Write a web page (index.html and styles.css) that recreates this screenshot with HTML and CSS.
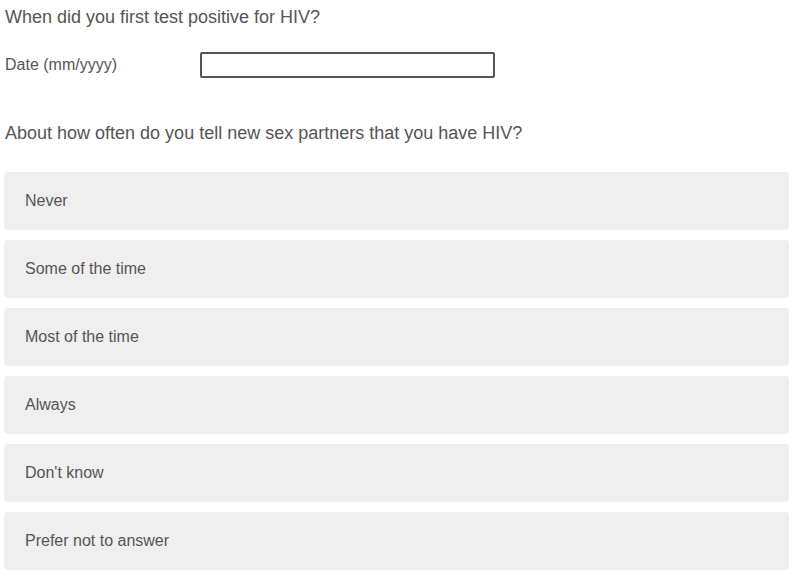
FILE: index.html
```html
<!DOCTYPE html>
<html lang="en">
<head>
<meta charset="utf-8">
<title>Survey</title>
<link rel="stylesheet" href="styles.css">
</head>
<body>
<main class="page">
  <h2 class="question first">When did you first test positive for HIV?</h2>
  <div class="date-row">
    <label class="date-label" for="date">Date (mm/yyyy)</label>
    <input class="date-input" id="date" type="text">
  </div>
  <h2 class="question second">About how often do you tell new sex partners that you have HIV?</h2>
  <div class="options">
    <div class="option">Never</div>
    <div class="option">Some of the time</div>
    <div class="option">Most of the time</div>
    <div class="option">Always</div>
    <div class="option">Don't know</div>
    <div class="option">Prefer not to answer</div>
  </div>
</main>
</body>
</html>
```
FILE: styles.css
```css
html, body {
  margin: 0;
  padding: 0;
  background: #ffffff;
}
body {
  font-family: "Liberation Sans", Arial, sans-serif;
  color: #555555;
}
.page {
  padding: 0 7px 0 4px;
}
.question {
  font-size: 18px;
  line-height: 22px;
  font-weight: normal;
  margin: 0;
  padding-left: 1px;
  color: #555555;
}
.question.first {
  margin-top: 6px;
}
.date-row {
  display: flex;
  align-items: center;
  margin-top: 24px;
}
.date-label {
  width: 196px;
  padding-left: 1px;
  box-sizing: border-box;
  font-size: 16px;
  line-height: 20px;
}
.date-input {
  margin: 0;
  width: 295px;
  height: 26px;
  box-sizing: border-box;
  border: 2px solid #555555;
  border-radius: 2px;
  padding: 0 4px;
  font: inherit;
  background: #ffffff;
}
.question.second {
  margin-top: 44px;
}
.options {
  display: flex;
  flex-direction: column;
  gap: 10px;
  margin-top: 28px;
}
.option {
  height: 58px;
  box-sizing: border-box;
  background: #efefef;
  border-radius: 4px;
  display: flex;
  align-items: center;
  padding: 0 0 0 21px;
  font-size: 16px;
  line-height: 20px;
  color: #555555;
}
```
